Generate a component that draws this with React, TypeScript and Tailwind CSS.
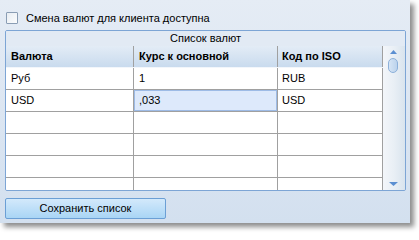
import React from 'react';

const rows = [
  { name: 'Руб', rate: '1', iso: 'RUB' },
  { name: 'USD', rate: ',033', iso: 'USD', selected: true },
  { name: '', rate: '', iso: '' },
  { name: '', rate: '', iso: '' },
  { name: '', rate: '', iso: '' },
  { name: '', rate: '', iso: '' },
];

const App: React.FC = () => {
  return (
    <div className="w-[419px] h-[233px] bg-white overflow-hidden" style={{ fontFamily: '"Liberation Sans", Arial, sans-serif' }}>
      <div className="w-[410px] h-[223px] bg-gradient-to-b from-[#e5ecf5] to-[#d3e0ef] shadow-[4px_4px_5px_rgba(0,0,0,0.45)] pl-[5px] pt-[12px] flex flex-col">
        {/* checkbox */}
        <label className="flex items-center h-[12px] pl-[1px] text-[11px] text-black">
          <span className="w-[12px] h-[12px] border border-[#8a9db4] bg-gradient-to-br from-[#e8edf3] to-[#fbfcfd] rounded-[1px]" />
          <span className="ml-[8px] leading-none">Смена валют для клиента доступна</span>
        </label>

        {/* group box */}
        <div className="mt-[6px] w-[401px] h-[161px] border border-[#7da5d5] rounded-[2px] flex flex-col overflow-hidden">
          <div className="h-[15px] flex items-center justify-center text-[11px] text-black leading-none bg-[#e2eaf4]">
            Список валют
          </div>
          <div className="flex flex-1 min-h-0">
            <div className="w-[377px] flex flex-col bg-white overflow-hidden">
              <div className="grid grid-cols-[128px_144px_105px] h-[22px] shrink-0 bg-gradient-to-b from-[#e3ecf6] to-[#c9dbee] border-b border-[#f2f6fb] text-[11px] font-bold text-black">
                <div className="border-r border-[#a0a0a0] pl-[5px] flex items-center">Валюта</div>
                <div className="border-r border-[#a0a0a0] pl-[5px] flex items-center">Курс к основной</div>
                <div className="border-r border-[#a0a0a0] pl-[4px] flex items-center">Код по ISO</div>
              </div>
              {rows.map((r, i) => (
                <div key={i} className="grid grid-cols-[128px_144px_105px] h-[22px] shrink-0 border-b border-[#a0a0a0] text-[11px] text-black">
                  <div className="border-r border-[#a0a0a0] pl-[5px] flex items-center">{r.name}</div>
                  {r.selected ? (
                    <div className="border-r border-[#a0a0a0] flex items-stretch">
                      <div className="flex-1 border border-[#9dbbe6] bg-[#dde9fb] pl-[4px] flex items-center">{r.rate}</div>
                    </div>
                  ) : (
                    <div className="border-r border-[#a0a0a0] pl-[5px] flex items-center">{r.rate}</div>
                  )}
                  <div className="border-r border-[#a0a0a0] pl-[4px] flex items-center">{r.iso}</div>
                </div>
              ))}
            </div>
            {/* scrollbar */}
            <div className="w-[22px] bg-gradient-to-r from-[#f3f6fa] via-[#e9eff5] to-[#d9e4ee] flex flex-col items-center pt-[4px] pb-[4px]">
              <svg width="7" height="4" viewBox="0 0 7 4" className="ml-[-2px]">
                <path d="M3.5 0 L7 4 L0 4 Z" fill="#5b8fd1" />
              </svg>
              <div className="mt-[4px] ml-[-2px] w-[10px] h-[15px] rounded-[5px] border border-[#8cb0da] bg-gradient-to-r from-[#d6e5f5] to-[#bcd3ec]" />
              <div className="flex-1" />
              <svg width="9" height="4" viewBox="0 0 9 4" className="ml-[-1px]">
                <path d="M0 0 L9 0 L4.5 4 Z" fill="#5b8fd1" />
              </svg>
            </div>
          </div>
        </div>

        {/* button */}
        <button className="mt-[7px] w-[161px] h-[21px] border border-[#6b9fd5] rounded-[2px] bg-gradient-to-b from-[#d3e9fb] to-[#a9d5f5] text-[11px] text-black leading-none flex items-center justify-center">
          Сохранить список
        </button>
      </div>
    </div>
  );
};

export default App;
